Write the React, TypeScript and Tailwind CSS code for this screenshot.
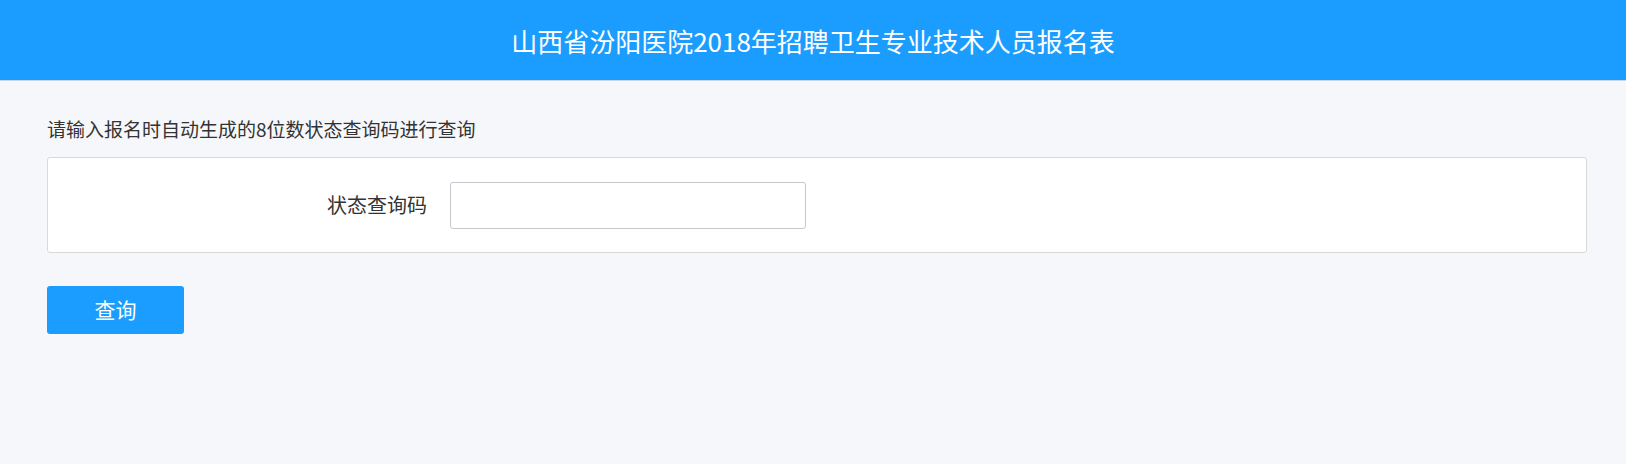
export default function App() {
  return (
    <div
      className="min-h-[464px] bg-[#f6f7fb] text-[#333]"
      style={{ fontFamily: '"Noto Sans CJK SC", "Noto Sans", sans-serif' }}
    >
      <header className="flex h-[81px] items-center justify-center border-b border-[#c9d6e3] bg-[#1b9dff]">
        <h1 className="text-[26px] font-normal text-white">山西省汾阳医院2018年招聘卫生专业技术人员报名表</h1>
      </header>

      <main className="pl-[47px] pr-[39px]">
        <p className="mt-[36px] text-[19px] leading-[24px]">请输入报名时自动生成的8位数状态查询码进行查询</p>

        <div className="mt-[16px] flex h-[96px] items-center rounded-[3px] border border-[#d9d9d9] bg-white">
          <label className="w-[379px] text-right text-[20px]">状态查询码</label>
          <input
            type="text"
            className="ml-[23px] h-[47px] w-[356px] rounded-[3px] border border-[#c5c9ce] bg-white px-3 outline-none"
          />
        </div>

        <button className="mt-[33px] flex h-[48px] w-[137px] items-center justify-center rounded-[3px] bg-[#1b9dff] text-[21px] text-white">
          查询
        </button>
      </main>
    </div>
  );
}
